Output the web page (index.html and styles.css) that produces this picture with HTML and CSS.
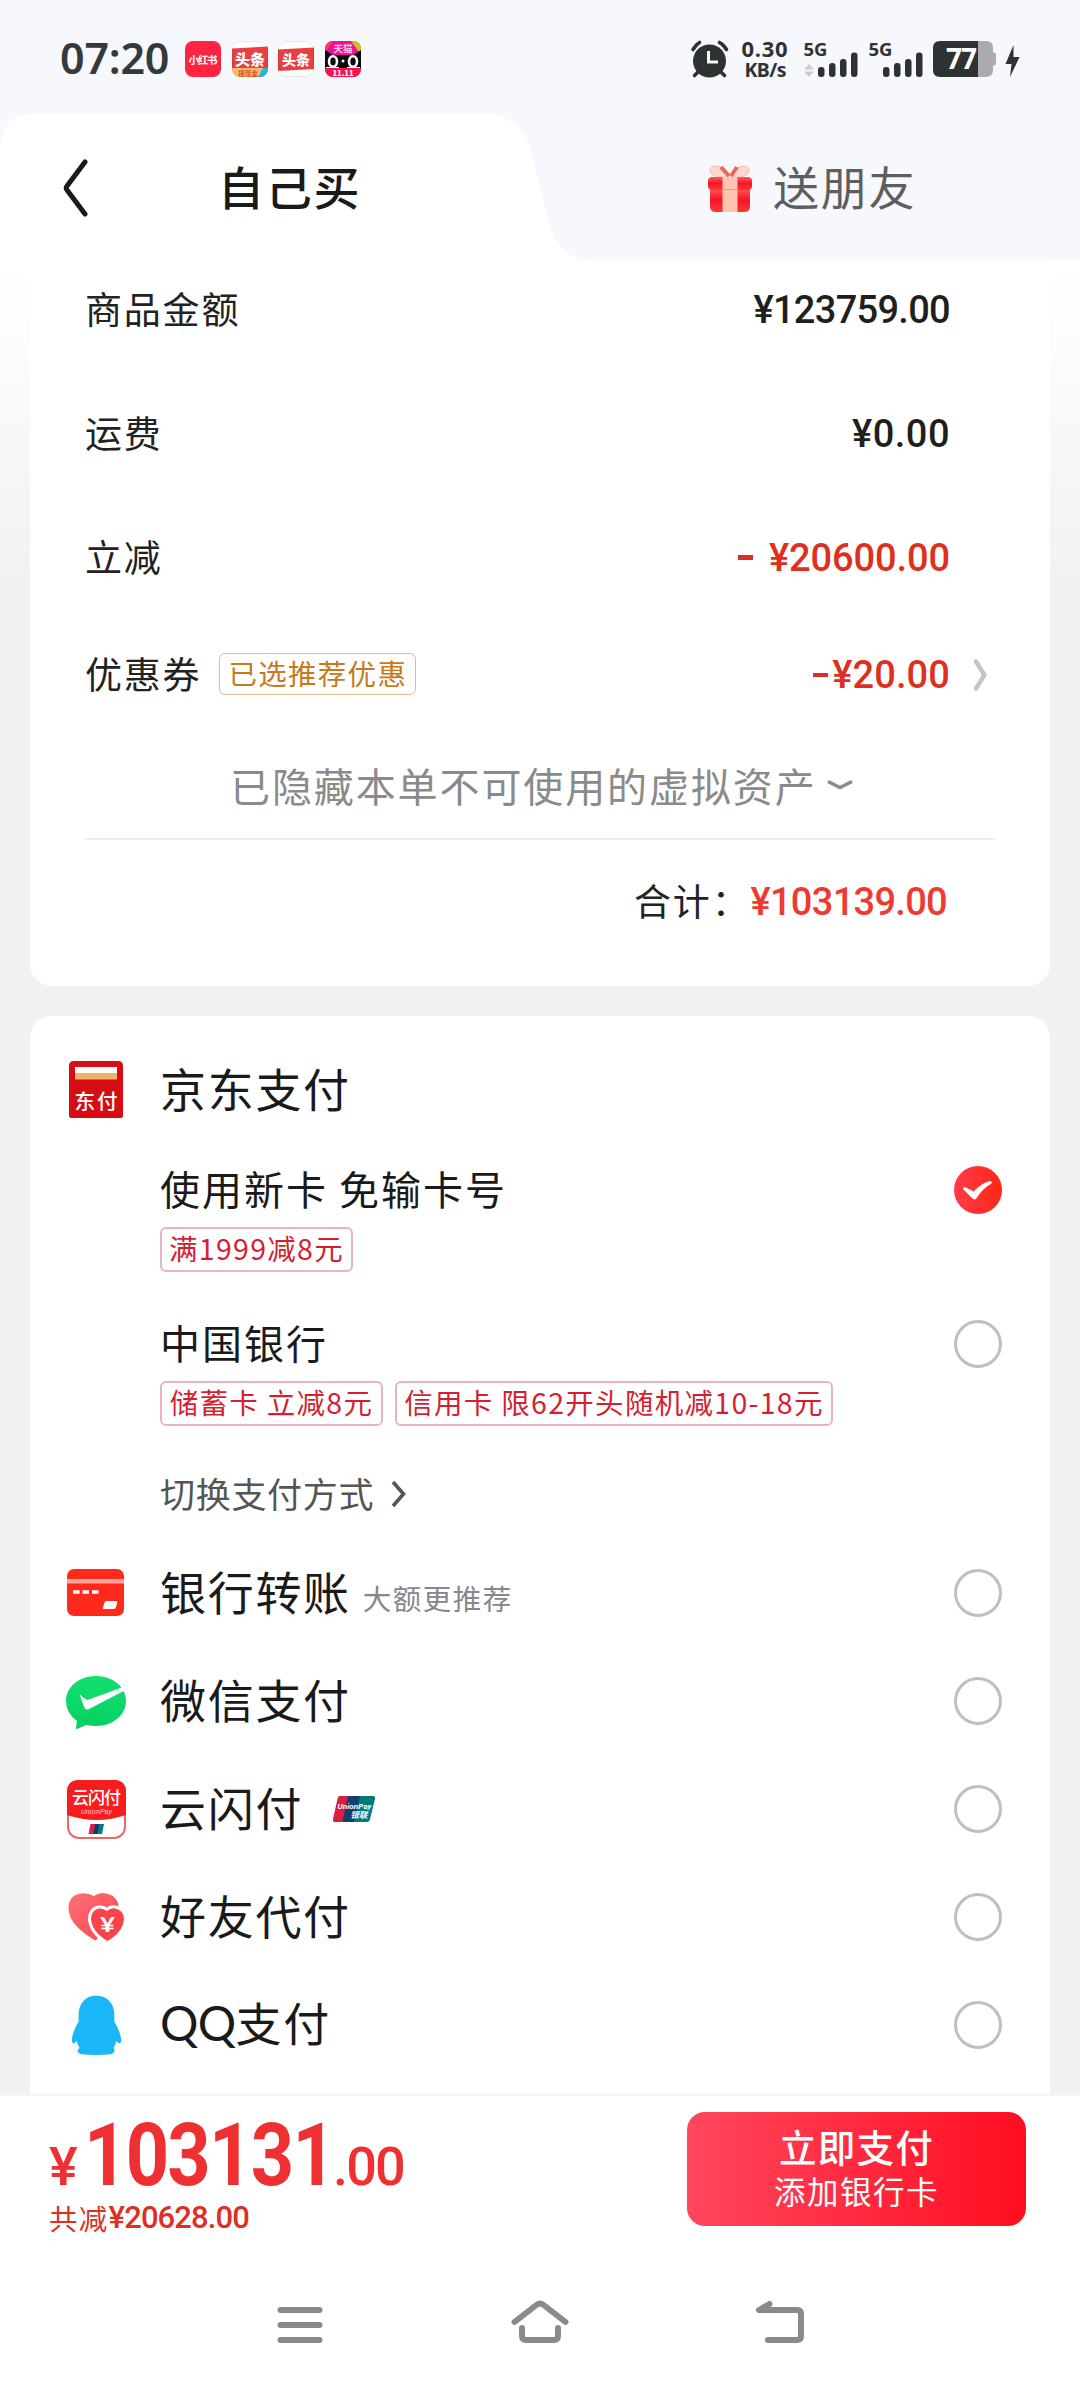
FILE: index.html
```html
<!DOCTYPE html>
<html lang="zh-CN">
<head>
<meta charset="utf-8">
<meta name="viewport" content="width=1080">
<title>京东支付</title>
<link rel="stylesheet" href="styles.css">
</head>
<body>
<div class="screen">
  <header class="header">
    <div class="status">
      <span class="clock">07:20</span>
      <div class="apps">
        <svg class="app" viewBox="0 0 36 36"><rect width="36" height="36" rx="8" fill="#ff2442"/><text x="18" y="22.5" text-anchor="middle" font-size="10.5" font-weight="700" fill="#fff" textLength="29">小红书</text></svg>
        <svg class="app" viewBox="0 0 36 36"><clipPath id="c1"><rect width="36" height="36" rx="8"/></clipPath><g clip-path="url(#c1)"><rect width="36" height="36" fill="#fff"/><path d="M0 7.500 36 5.500V29H0z" fill="#e84040"/><rect y="27" width="36" height="9" fill="#ffb870"/><path d="M26 36 31 27h5v9z" fill="#22b8e8"/><text x="18" y="23.500" text-anchor="middle" font-size="15" font-weight="900" fill="#fff">头条</text><text x="16" y="34.500" text-anchor="middle" font-size="6.500" font-weight="700" fill="#d9571b">搜现金</text></g><rect x=".5" y=".5" width="35" height="35" rx="8" fill="none" stroke="#000" stroke-opacity=".08"/></svg>
        <svg class="app" viewBox="0 0 36 36"><clipPath id="c2"><rect width="36" height="36" rx="8"/></clipPath><g clip-path="url(#c2)"><rect width="36" height="36" fill="#fff"/><path d="M0 8.500 36 6.500V28L0 30z" fill="#e84040"/><text x="18" y="23.500" text-anchor="middle" font-size="14" font-weight="900" fill="#fff">头条</text></g><rect x=".5" y=".5" width="35" height="35" rx="8" fill="none" stroke="#000" stroke-opacity=".1"/></svg>
        <svg class="app" viewBox="0 0 36 36"><clipPath id="c3"><rect width="36" height="36" rx="8"/></clipPath><g clip-path="url(#c3)"><rect width="36" height="36" fill="#e6139a"/><path d="M26 0h10v14z" fill="#c9c21c"/><path d="M0 0h8L0 12z" fill="#ff3a6b"/><path d="M0 9 8 14h20l8-5v18H0z" fill="#0b0b0b"/><rect y="27" width="36" height="9" fill="#f5154a"/><g fill="none" stroke="#fff" stroke-width="2.600"><ellipse cx="8" cy="20.500" rx="4" ry="5.200"/><ellipse cx="28" cy="20.500" rx="4" ry="5.200"/></g><circle cx="18" cy="20" r="1.500" fill="#fff"/><path d="M1 26.500h13M22 26.500h13" stroke="#fff" stroke-width="1.200"/><text x="18" y="11" text-anchor="middle" font-size="9.500" font-weight="700" fill="#ffc3e0">天猫</text><text x="18" y="34.500" text-anchor="middle" font-size="7.500" font-weight="900" fill="#fff">11.11</text></g></svg>
      </div>
      <svg class="system" viewBox="690 30 336 58" fill="#2f3232">
        <circle cx="709.500" cy="61" r="16.500"/>
        <path d="M693 49.500q3-5 6.500-7M719.500 42.500q4 2 7 7M698 72l-3.500 3.500M721 72l3.500 3.500" fill="none" stroke="#2f3232" stroke-width="3.600" stroke-linecap="round"/>
        <path d="M708.500 51v11h9.500" fill="none" stroke="#f6f8fd" stroke-width="3"/>
        <g class="sys-text"><text x="741.500" y="57" font-size="22" textLength="46">0.30</text><text x="744.500" y="76.500" font-size="19.500" textLength="42">KB/s</text><text x="803.500" y="55.500" font-size="18.500" textLength="24">5G</text><text x="868.500" y="55.500" font-size="18.500" textLength="24">5G</text></g>
        <path d="m809 64 5 5.500h-10zM809 77l-5-5.500h10z" fill="#c9cbd0"/>
        <rect x="818" y="67" width="6.500" height="10" rx="3"/><rect x="829" y="63" width="6.500" height="14" rx="3"/><rect x="840" y="59" width="6.500" height="18" rx="3"/><rect x="851" y="52.500" width="6.500" height="24.500" rx="3"/>
        <rect x="883" y="67" width="6.500" height="10" rx="3"/><rect x="894" y="63" width="6.500" height="14" rx="3"/><rect x="905" y="59" width="6.500" height="18" rx="3"/><rect x="916" y="52.500" width="6.500" height="24.500" rx="3"/>
        <path d="M978 41h8q7 0 7 7v4.500q3 0 3 2v9q0 2-3 2V70q0 7-7 7h-8z" fill="#a9abae"/>
        <path d="M978 41h-38q-7 0-7 7v22q0 7 7 7h38z"/>
        <text x="946" y="69" font-size="28" fill="#fff" class="sys-text" textLength="31">77</text>
        <path d="m1013.500 45-8 19h6l-1.500 13 9.500-20h-6z"/>
      </svg>
    </div>
    <div class="tabs">
      <svg class="tab-shape" viewBox="0 0 1080 146"><path d="M0 33Q2 0 33 0H485Q520 0 531 36L548 105Q558 146 592 146H0z" fill="#fff"/></svg>
      <div class="tab tab-self">
        <svg class="back" viewBox="60 156 30 64"><path d="M85 162 67 186q-1.500 2 0 4l18 24" fill="none" stroke="#1a1a1a" stroke-width="5" stroke-linecap="round"/></svg>
        <span class="tab-on">自己买</span>
      </div>
      <div class="tab tab-gift">
        <svg class="gift" viewBox="0 0 46 52"><defs><linearGradient id="gr" x2="0" y2="1"><stop stop-color="#ff5b55"/><stop offset=".5" stop-color="#f5142a"/><stop offset="1" stop-color="#ff3a30"/></linearGradient></defs><path d="M22 15C12 16 3 14 3 8S18 2 22 15zM24 15c10 1 18-1 18-7S28 2 24 15z" fill="#ffd9cf" stroke="#f9b5a6" stroke-width="1"/><path d="M22 14 14 5M24 14l6-9" stroke="#e86a56" stroke-width="4"/><path d="M3 26h40v18q0 6-6 6H9q-6 0-6-6z" fill="url(#gr)"/><rect x="1" y="15" width="44" height="13" rx="4" fill="url(#gr)"/><rect x="15.500" y="15" width="15" height="35" fill="#ffc3b0"/><path d="M15.500 27.500h15" stroke="#f0957f"/></svg>
        <span class="tab-off">送朋友</span>
      </div>
    </div>
  </header>

  <main class="content">
    <section class="card bill">
      <div class="row r1"><span class="label">商品金额</span><span class="amount">¥123759.00</span></div>
      <div class="row r2"><span class="label">运费</span><span class="amount">¥0.00</span></div>
      <div class="row r3"><span class="label">立减</span><span class="amount red"><i class="dash gap"></i>¥20600.00</span></div>
      <div class="row r4"><span class="label">优惠券</span><span class="tag-gold">已选推荐优惠</span><span class="amount red"><i class="dash"></i>¥20.00</span><svg class="go" viewBox="0 0 14 32"><path d="M2 2.500 10.500 16 2 29.500" fill="none" stroke="#c4c4c4" stroke-width="4.500" stroke-linecap="round"/></svg></div>
      <div class="hidden-assets"><span>已隐藏本单不可使用的虚拟资产</span><svg viewBox="0 0 28 12"><path d="M2 2.500 14 8.500 26 2.500" fill="none" stroke="#8c8c8c" stroke-width="3.500"/></svg></div>
      <div class="total"><span class="label">合计：</span><span class="amount">¥103139.00</span></div>
    </section>

    <section class="card pay">
      <div class="method head">
        <svg class="icon" viewBox="64 1060 64 60"><path d="M69 1066q0-5 5-5h44q5 0 5 5v50q0 2-2 2H71q-2 0-2-2z" fill="#d60d12"/><rect x="75" y="1067" width="42" height="6" fill="#fff"/><rect x="75" y="1073" width="42" height="6.500" fill="#f0b468"/><text x="96" y="1109" font-size="20.500" font-weight="500" fill="#fff" text-anchor="middle" textLength="43">东付</text></svg>
        <span class="name">京东支付</span>
      </div>
      <div class="option first">
        <div class="option-title"><span>使用新卡 免输卡号</span>
          <svg class="radio" viewBox="0 0 48 48"><defs><linearGradient id="ck" x2="1"><stop stop-color="#ff3c4c"/><stop offset="1" stop-color="#ff2613"/></linearGradient></defs><circle cx="24" cy="24" r="24" fill="url(#ck)"/><path d="M9 23q0-2.500 3-1.500l7.500 4Q27 17.500 36 15q2.500 0 1.500 2.500-9 5-14.500 14-2.500 3.500-5 .5z" fill="#fff"/></svg></div>
        <div class="tags"><span class="tag t1">满1999减8元</span></div>
      </div>
      <div class="option">
        <div class="option-title"><span>中国银行</span><i class="radio empty"></i></div>
        <div class="tags"><span class="tag t2">储蓄卡 立减8元</span><span class="tag t3">信用卡 限62开头随机减10-18元</span></div>
      </div>
      <div class="switch"><span>切换支付方式</span><svg viewBox="0 0 16 28"><path d="M2 2 12.500 14 2 26" fill="none" stroke="#555" stroke-width="3.600"/></svg></div>
      <div class="method">
        <svg class="icon" viewBox="64 1564 64 60"><rect x="67" y="1570" width="57" height="47" rx="7" fill="#ff2a1c"/><rect x="67" y="1580" width="57" height="4.500" fill="#ffa39d"/><path d="M73 1593h6.500M82.500 1593h6.500M92 1593h6.500" stroke="#fff" stroke-width="3.600"/><path d="M106 1602h10q2 0 1 2l-1 4q-.5 2-2.500 2h-10q-1.500 0-.5-2l1.500-4q.5-2 1.500-2z" fill="#fff"/></svg>
        <span class="name">银行转账</span><span class="note">大额更推荐</span><i class="radio empty"></i>
      </div>
      <div class="method">
        <svg class="icon" viewBox="64 1671 64 60"><defs><linearGradient id="wx" x2="0" y2="1"><stop stop-color="#12e06f"/><stop offset="1" stop-color="#07cf63"/></linearGradient></defs><path d="M96 1676c17 0 30 11 30 25s-13 25-30 25q-5 0-10-1l-9 4q-1 0-1-1l1-7q-11-8-11-20c0-14 13-25 30-25z" fill="url(#wx)"/><path d="M79.500 1694q5 5 8 6l37-13.500q.5 2 1 3.500L91 1708q-5 3.500-7-1z" fill="#fff"/></svg>
        <span class="name">微信支付</span><i class="radio empty"></i>
      </div>
      <div class="method">
        <svg class="icon" viewBox="64 1779 64 60"><rect x="68" y="1781" width="57" height="57" rx="11" fill="#fff" stroke="#ec6668" stroke-width="2"/><path d="M67 1815v-23q0-12 12-12h35q12 0 12 12v23q-29 10-59 0z" fill="#f71d1f"/><text x="96.500" y="1804" font-size="17" font-weight="500" fill="#fff" text-anchor="middle" textLength="49">云闪付</text><text x="96.500" y="1814" class="latin" font-size="7.500" font-style="italic" fill="#ffc5c0" text-anchor="middle" textLength="31">UnionPay</text><path d="M90.500 1824h5l-2 10h-5z" fill="#e11d3f"/><path d="M95 1824h5l-2 10h-5z" fill="#123a6f"/><path d="M99.500 1824h4.500l-2 10h-4.500z" fill="#0a7a7c"/></svg>
        <span class="name">云闪付</span>
        <svg class="union" viewBox="0 0 42 26"><path d="M7 0h10l-6 26H2q-2.500 0-2-3L4.500 3Q5 0 7 0z" fill="#d5213f"/><path d="M15 0h13l-6 26H9.500z" fill="#123e70"/><path d="M27 0h13q2.500 0 2 3l-5 20q-.5 3-3 3H21z" fill="#04797d"/><text class="latin" x="21.500" y="12.500" text-anchor="middle" font-size="8" font-style="italic" font-weight="700" fill="#fff" textLength="34">UnionPay</text><text x="26" y="21.500" text-anchor="middle" font-size="8.500" font-weight="700" font-style="italic" fill="#fff">银联</text></svg>
        <i class="radio empty"></i>
      </div>
      <div class="method">
        <svg class="icon" viewBox="64 1887 64 60"><defs><linearGradient id="ht" x2="1" y2="1"><stop stop-color="#ff7074"/><stop offset="1" stop-color="#fb4550"/></linearGradient></defs><path d="M94 1896q6-4 12-2.500 12 2 13 15l-16 20-7 12q-3-1-7-4-20-13-20.500-28 0-13 12-15 7-1 13.500 2.500z" fill="url(#ht)"/><path d="M107 1911q4-3.500 8.500-2.500 8.500 2 8.500 10.500-1 13-16.500 22-15.500-9-16.500-22 0-8.500 7.500-10.500 4.500-.5 8.500 2.500z" fill="#f9434c" stroke="#fff" stroke-width="6" paint-order="stroke" stroke-linejoin="round"/><text class="latin" x="107.500" y="1931.500" text-anchor="middle" font-size="20" font-weight="500" fill="#fff" textLength="15" lengthAdjust="spacingAndGlyphs">¥</text></svg>
        <span class="name">好友代付</span><i class="radio empty"></i>
      </div>
      <div class="method">
        <svg class="icon" viewBox="64 1995 64 62"><path d="M96 1995.500c12 0 19 9 19 20v7q7 12 7 20-1 5-5 0-1 5-3 7 3 4-1 6-2 1.500-17 1.500t-17-1.500q-4-2 0-6-2-3-3-7-4 5-5 0 0-8 7-20v-7c0-11 7-20 18-20z" fill="#19b7f8"/></svg>
        <span class="name"><span class="qq">QQ</span>支付</span><i class="radio empty"></i>
      </div>
    </section>
  </main>

  <footer class="paybar">
    <div class="sum">
      <div class="price"><span class="yen">¥</span><span class="int">103131</span><span class="dec">.00</span></div>
      <div class="saved"><span>共减</span><b>¥20628.00</b></div>
    </div>
    <button class="submit"><span class="go-pay">立即支付</span><span class="add-card">添加银行卡</span></button>
  </footer>
  <nav class="sysnav">
    <svg viewBox="270 2295 60 56"><path d="M280.500 2310h39M280.500 2325h39M280.500 2340h39"/></svg>
    <svg viewBox="510 2295 60 56"><path d="m514.500 2322 22.500-17.500q3-2 6 0l22.500 17.500M522 2328v8q0 4 4 4h28q4 0 4-4v-8"/></svg>
    <svg viewBox="750 2295 60 56"><path d="m769.500 2304-10.500 6h38q4 0 4 4v22q0 4-4 4h-29"/></svg>
  </nav>
</div>
</body>
</html>
```
FILE: styles.css
```css
* { box-sizing: border-box; }
body { margin: 0; font-family: "Noto Sans CJK SC", sans-serif; color: #1f1f1f; background: #fff; }
svg { display: block; flex: none; }
i { font-style: normal; }
.screen { width: 1080px; height: 2388px; display: flex; flex-direction: column; overflow: hidden; white-space: nowrap; }
.latin { font-family: Roboto, sans-serif; }

/* Header */
.header { height: 260px; background: #f6f8fd; }
.status { height: 114px; padding: 3px 54px 0 60px; display: flex; align-items: center; }
.clock { font: 600 43px/1 "Noto Sans", sans-serif; color: #36393b; width: 125px; padding-bottom: 2px; letter-spacing: -0.200px; }
.apps { display: flex; gap: 10.700px; }
.app { width: 36px; height: 36px; }
.system { width: 336px; height: 58px; margin-left: auto; }
.sys-text { font-family: "Noto Sans", sans-serif; font-weight: 700; }
.tabs { height: 146px; position: relative; display: flex; }
.tab-shape { position: absolute; inset: 0; width: 1080px; height: 146px; }
.tab { position: relative; display: flex; align-items: center; width: 540px; padding-bottom: 4px; }
.tab-self { padding-left: 60px; padding-top: 6px; }
.back { width: 30px; height: 64px; }
.tab-on, .tab-off { font-size: 46px; line-height: 60px; letter-spacing: 1.800px; padding-bottom: 6px; }
.tab-on { font-weight: 500; margin-left: 128px; color: #1a1a1a; }
.tab-gift { padding-left: 167px; padding-top: 5px; }
.gift { width: 46px; height: 52px; }
.tab-off { margin-left: 20px; color: #5e5e5e; }

/* Scroll area */
.content { height: 1834px; padding: 0 30px; background: linear-gradient(#fff 0, #fcfcfc 90px, #f7f7f7 200px, #f1f1f1 325px); }
.card { background: #fff; }
.bill { height: 726px; border-radius: 0 0 22px 22px; }
.row { display: flex; align-items: center; padding: 0 100px 0 55px; }
.r1 { height: 100px; }
.r2 { height: 148px; }
.r3 { height: 98px; padding-top: 1px; }
.r4 { height: 138px; padding-right: 62px; }
.label { font-size: 37px; line-height: 50px; letter-spacing: 1.800px; padding-bottom: 4px; color: #222; }
.amount { display: flex; align-items: center; margin-left: auto; font: 500 38px/50px Roboto, sans-serif; letter-spacing: -0.700px; }
.r2 .amount { letter-spacing: 0.500px; }
.r3 .amount { letter-spacing: -0.100px; }
.r4 .amount { letter-spacing: 0.100px; }
.red { color: #de2f20; }
.dash { width: 15px; height: 4.500px; background: currentColor; margin-right: 4px; }
.dash.gap { margin-right: 16px; }
.go { width: 14px; height: 32px; margin-left: 24px; }
.tag-gold { height: 42px; margin: 0 0 2px 18px; padding: 0 8px; border: 1px solid #d9bd8e; border-radius: 6px; font-size: 28.500px; line-height: 37px; letter-spacing: 1.300px; color: #c67a1b; }
.hidden-assets { height: 94px; padding: 0 0 8px 200px; display: flex; align-items: center; font-size: 40px; letter-spacing: 1.900px; color: #8a8a8a; line-height: 50px; }
.hidden-assets span { padding-bottom: 4px; }
.hidden-assets svg { width: 28px; height: 12px; margin: 0 0 4px 9px; }
.total { height: 124px; margin: 0 54px; padding: 2px 49px 0 0; border-top: 2px solid #efefef; display: flex; align-items: center; justify-content: flex-end; }
.total .amount { margin-left: 0; color: #ef3a30; }

.pay { margin-top: 30px; height: 1078px; padding: 0 48px 0 34px; border-radius: 22px 22px 0 0; }
.method { height: 108px; display: flex; align-items: center; }
.method.head { height: 148px; }
.icon { width: 64px; height: 60px; }
.name { margin-left: 32px; padding-bottom: 7px; font-size: 46px; line-height: 60px; letter-spacing: 1.700px; color: #1a1a1a; }
.qq { font-family: Lato, sans-serif; font-size: 48px; letter-spacing: -0.700px; }
.note { margin: 8px 0 0 12px; font-size: 28.500px; letter-spacing: 1.500px; color: #85878c; }
.union { width: 42px; height: 26px; margin-left: 30px; }
.radio { width: 48px; height: 48px; margin-left: auto; }
.empty { border: 3px solid #bfbfbf; border-radius: 50%; }
.option { margin: 46px 0 0 96px; }
.option.first { margin-top: 0; }
.option-title { height: 52px; display: flex; align-items: center; font-size: 40px; line-height: 52px; letter-spacing: 2px; color: #1a1a1a; }
.option-title span { padding-bottom: 4px; }
.tags { display: flex; gap: 12px; margin-top: 11px; }
.tag { height: 45px; border: 2px solid #eab3c2; border-radius: 6px; color: #d41f33; font-size: 28.500px; line-height: 38px; text-align: center; letter-spacing: 1.300px; }
.t1 { width: 193px; }
.t2 { width: 223px; }
.t3 { width: 438px; }
.switch { height: 68px; margin: 34px 0 11px 96px; display: flex; align-items: center; font-size: 35px; letter-spacing: 0.700px; color: #555; }
.switch span { padding-bottom: 3px; }
.switch svg { width: 16px; height: 28px; margin-left: 17px; }

/* Payment bar */
.paybar { height: 170px; border-top: 2px solid #f5f5f5; padding: 16px 54px 0 49px; display: flex; justify-content: space-between; background: #fff; }
.price { height: 86px; display: flex; align-items: baseline; font-family: Roboto, sans-serif; font-weight: 500; color: #ee3033; line-height: 86px; }
.yen { font-size: 54px; width: 35px; }
.int { font-size: 87px; font-weight: 700; letter-spacing: -2px; width: 249px; transform: scaleX(0.870); transform-origin: 0 0; }
.dec { font-size: 54px; letter-spacing: -1.800px; }
.saved { display: flex; align-items: center; height: 40px; color: #de3022; font-size: 28.500px; line-height: 40px; letter-spacing: 1.300px; }
.saved b { font: 500 31px/40px Roboto, sans-serif; letter-spacing: -0.900px; }
.submit { width: 339px; height: 114px; border: 0; padding: 0; border-radius: 18px; background: linear-gradient(90deg, #ff475e, #ff0d20); color: #fff; font-family: inherit; display: flex; flex-direction: column; align-items: center; }
.go-pay { font-size: 37.500px; font-weight: 500; line-height: 49px; letter-spacing: 1.300px; margin-top: 9px; }
.add-card { font-size: 31.500px; line-height: 40px; letter-spacing: 1.500px; }

.sysnav { height: 124px; padding: 31px 0 0 270px; display: flex; gap: 180px; }
.sysnav svg { width: 60px; height: 56px; fill: none; stroke: #8a8a8a; stroke-width: 6; stroke-linecap: round; stroke-linejoin: round; }
```
